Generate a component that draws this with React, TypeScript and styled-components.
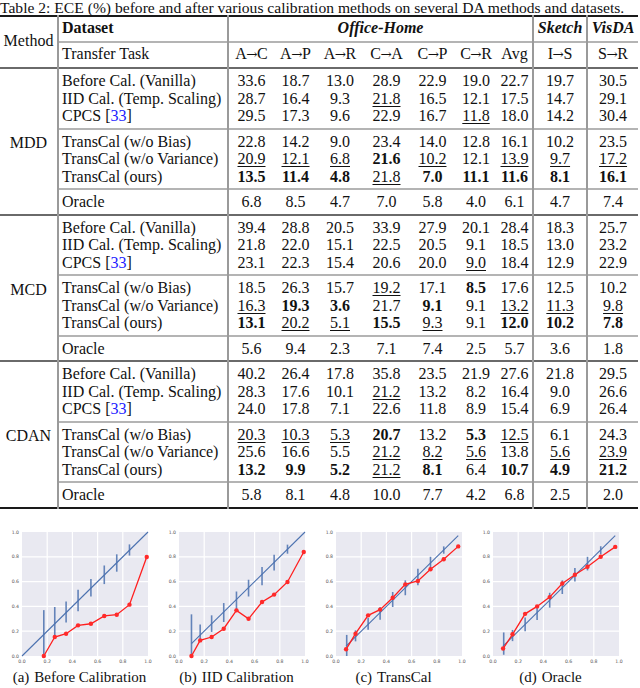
import React from 'react';
import styled, { createGlobalStyle, css } from 'styled-components';

const GlobalStyle = createGlobalStyle`
  body {
    margin: 0;
    background: #fff;
    font-family: 'Liberation Serif', 'Times New Roman', serif;
    color: #111;
  }
`;

const Cite = styled.span`
  color: #1a1aff;
`;

const CpcsLabel = () => (
  <>
    CPCS [<Cite>33</Cite>]
  </>
);

type Group = {
  method: string;
  rows: { label: React.ReactNode; values: string[] }[][];
};

// "_" = underlined, "*" = bold
const groups: Group[] = [
  {
    method: 'MDD',
    rows: [
      [
        { label: 'Before Cal. (Vanilla)', values: ['33.6', '18.7', '13.0', '28.9', '22.9', '19.0', '22.7', '19.7', '30.5'] },
        { label: 'IID Cal. (Temp. Scaling)', values: ['28.7', '16.4', '9.3', '_21.8', '16.5', '12.1', '17.5', '14.7', '29.1'] },
        { label: <CpcsLabel />, values: ['29.5', '17.3', '9.6', '22.9', '16.7', '_11.8', '18.0', '14.2', '30.4'] },
      ],
      [
        { label: 'TransCal (w/o Bias)', values: ['22.8', '14.2', '9.0', '23.4', '14.0', '12.8', '16.1', '10.2', '23.5'] },
        { label: 'TransCal (w/o Variance)', values: ['_20.9', '_12.1', '_6.8', '*21.6', '_10.2', '12.1', '_13.9', '_9.7', '_17.2'] },
        { label: 'TransCal (ours)', values: ['*13.5', '*11.4', '*4.8', '_21.8', '*7.0', '*11.1', '*11.6', '*8.1', '*16.1'] },
      ],
      [{ label: 'Oracle', values: ['6.8', '8.5', '4.7', '7.0', '5.8', '4.0', '6.1', '4.7', '7.4'] }],
    ],
  },
  {
    method: 'MCD',
    rows: [
      [
        { label: 'Before Cal. (Vanilla)', values: ['39.4', '28.8', '20.5', '33.9', '27.9', '20.1', '28.4', '18.3', '25.7'] },
        { label: 'IID Cal. (Temp. Scaling)', values: ['21.8', '22.0', '15.1', '22.5', '20.5', '9.1', '18.5', '13.0', '23.2'] },
        { label: <CpcsLabel />, values: ['23.1', '22.3', '15.4', '20.6', '20.0', '_9.0', '18.4', '12.9', '22.9'] },
      ],
      [
        { label: 'TransCal (w/o Bias)', values: ['18.5', '26.3', '15.7', '_19.2', '17.1', '*8.5', '17.6', '12.5', '10.2'] },
        { label: 'TransCal (w/o Variance)', values: ['_16.3', '*19.3', '*3.6', '21.7', '*9.1', '9.1', '_13.2', '_11.3', '_9.8'] },
        { label: 'TransCal (ours)', values: ['*13.1', '_20.2', '_5.1', '*15.5', '_9.3', '9.1', '*12.0', '*10.2', '*7.8'] },
      ],
      [{ label: 'Oracle', values: ['5.6', '9.4', '2.3', '7.1', '7.4', '2.5', '5.7', '3.6', '1.8'] }],
    ],
  },
  {
    method: 'CDAN',
    rows: [
      [
        { label: 'Before Cal. (Vanilla)', values: ['40.2', '26.4', '17.8', '35.8', '23.5', '21.9', '27.6', '21.8', '29.5'] },
        { label: 'IID Cal. (Temp. Scaling)', values: ['28.3', '17.6', '10.1', '_21.2', '13.2', '8.2', '16.4', '9.0', '26.6'] },
        { label: <CpcsLabel />, values: ['24.0', '17.8', '7.1', '22.6', '11.8', '8.9', '15.4', '6.9', '26.4'] },
      ],
      [
        { label: 'TransCal (w/o Bias)', values: ['_20.3', '_10.3', '_5.3', '*20.7', '13.2', '*5.3', '_12.5', '6.1', '24.3'] },
        { label: 'TransCal (w/o Variance)', values: ['25.6', '16.6', '5.5', '_21.2', '_8.2', '_5.6', '13.8', '_5.6', '_23.9'] },
        { label: 'TransCal (ours)', values: ['*13.2', '*9.9', '*5.2', '_21.2', '*8.1', '6.4', '*10.7', '*4.9', '*21.2'] },
      ],
      [{ label: 'Oracle', values: ['5.8', '8.1', '4.8', '10.0', '7.7', '4.2', '6.8', '2.5', '2.0'] }],
    ],
  },
];

const tasks: [string, string][] = [
  ['A', 'C'],
  ['A', 'P'],
  ['A', 'R'],
  ['C', 'A'],
  ['C', 'P'],
  ['C', 'R'],
];
const colWidths = [58, 170, 46, 43, 46, 47, 45, 42, 36, 54, 51];

type Pt = [number, number];
type Bar = [number, number, number];
type ChartData = { tag: string; caption: string; line: [Pt, Pt]; bars: Bar[]; red: Pt[] };

const charts: ChartData[] = [
  {
    tag: '(a)',
    caption: 'Before Calibration',
    line: [[0, 0], [1, 1]],
    bars: [[0.173, 0, 0.37], [0.26, 0.16, 0.395], [0.35, 0.27, 0.44], [0.445, 0.36, 0.535], [0.547, 0.48, 0.62], [0.653, 0.58, 0.73], [0.752, 0.68, 0.82], [0.853, 0.81, 0.9]],
    red: [[0.173, 0], [0.26, 0.153], [0.35, 0.18], [0.445, 0.247], [0.547, 0.26], [0.653, 0.323], [0.752, 0.333], [0.853, 0.414], [0.99, 0.798]],
  },
  {
    tag: '(b)',
    caption: 'IID Calibration',
    line: [[0.099, 0.099], [1, 1]],
    bars: [[0.099, 0, 0.336], [0.168, 0.126, 0.255], [0.259, 0.194, 0.328], [0.355, 0.274, 0.427], [0.456, 0.37, 0.52], [0.552, 0.48, 0.615], [0.659, 0.57, 0.718], [0.755, 0.69, 0.817], [0.861, 0.825, 0.898]],
    red: [[0.099, 0], [0.168, 0.126], [0.259, 0.153], [0.355, 0.22], [0.456, 0.368], [0.552, 0.3], [0.659, 0.435], [0.755, 0.495], [0.861, 0.597], [0.99, 0.839]],
  },
  {
    tag: '(c)',
    caption: 'TransCal',
    line: [[0.08, 0.08], [0.97, 0.97]],
    bars: [[0.085, 0, 0.17], [0.155, 0.118, 0.207], [0.255, 0.212, 0.306], [0.35, 0.293, 0.395], [0.45, 0.395, 0.516], [0.55, 0.49, 0.61], [0.65, 0.57, 0.704], [0.75, 0.69, 0.8], [0.855, 0.825, 0.884]],
    red: [[0.08, 0.054], [0.155, 0.18], [0.255, 0.328], [0.35, 0.374], [0.45, 0.47], [0.55, 0.578], [0.65, 0.605], [0.75, 0.7], [0.855, 0.78], [0.97, 0.884]],
  },
  {
    tag: '(d)',
    caption: 'Oracle',
    line: [[0.08, 0.08], [0.97, 0.97]],
    bars: [[0.085, 0.01, 0.19], [0.155, 0.12, 0.21], [0.255, 0.2, 0.31], [0.35, 0.29, 0.4], [0.45, 0.39, 0.51], [0.55, 0.5, 0.61], [0.65, 0.6, 0.71], [0.75, 0.69, 0.8], [0.855, 0.82, 0.885]],
    red: [[0.08, 0.06], [0.155, 0.175], [0.255, 0.34], [0.35, 0.4], [0.45, 0.475], [0.55, 0.585], [0.65, 0.655], [0.75, 0.72], [0.855, 0.8], [0.97, 0.88]],
  },
];

const Page = styled.div`
  width: 640px;
  height: 688px;
  overflow: hidden;
`;

const Caption = styled.div`
  font-size: 15.6px;
  line-height: 15px;
  height: 15px;
  white-space: nowrap;
`;

const Table = styled.table`
  width: 638px;
  table-layout: fixed;
  border-collapse: collapse;
  font-size: 16px;
  line-height: 17.5px;
  border-top: 2px solid #1a1a1a;
  border-bottom: 2px solid #1a1a1a;
`;

type RowProps = { $rule?: 'group' | 'section'; $padTop?: boolean; $padBottom?: boolean; $head?: boolean };

const Row = styled.tr<RowProps>`
  & > td {
    padding-top: ${(p) => (p.$head ? 2 : p.$padTop ? 3 : 0)}px;
    padding-bottom: ${(p) => (p.$head ? 4 : p.$padBottom ? 3 : 0)}px;
  }
  ${(p) =>
    p.$rule === 'group' &&
    css`
      & > td {
        border-top: 2px solid #6a6a6a;
      }
    `}
  ${(p) =>
    p.$rule === 'section' &&
    css`
      & > td {
        border-top: 2px solid #b4b4b4;
      }
    `}
`;

const MethodCell = styled.td`
  text-align: center;
  vertical-align: middle;
  padding: 0;
`;

const LabelCell = styled.td<{ $bold?: boolean }>`
  padding-left: 3px;
  padding-right: 0;
  white-space: nowrap;
  border-left: 2px solid #9a9a9a;
  font-weight: ${(p) => (p.$bold ? 700 : 400)};
`;

const NumCell = styled.td<{ $rule?: boolean }>`
  text-align: center;
  padding-left: 0;
  padding-right: 0;
  white-space: nowrap;
  ${(p) => p.$rule && 'border-left: 2px solid #9a9a9a;'}
`;

const DatasetCell = styled(NumCell)`
  font-weight: 700;
  font-style: italic;
`;

const Arrow = styled.span`
  font-family: 'DejaVu Serif', serif;
  font-size: 13.5px;
  margin: 0 -0.5px;
`;

const Under = styled.span`
  text-decoration: underline;
  text-underline-offset: 2px;
  text-decoration-thickness: 1px;
`;

const Bold = styled.span`
  font-weight: 700;
`;

const Figures = styled.div`
  display: flex;
  gap: 12px;
  padding: 18px 0 0 7px;
`;

const Panel = styled.div`
  width: 145px;
  display: flex;
  flex-direction: column;
  align-items: center;
`;

const PanelCaption = styled.div`
  font-size: 15px;
  line-height: 17px;
  margin-top: 4px;
  white-space: nowrap;
`;

const Tag = styled.span`
  margin-right: 5px;
`;

const Value = ({ v }: { v: string }) => {
  if (v.startsWith('_')) return <Under>{v.slice(1)}</Under>;
  if (v.startsWith('*')) return <Bold>{v.slice(1)}</Bold>;
  return <>{v}</>;
};

const Task = ({ from, to }: { from: string; to: string }) => (
  <>
    {from}
    <Arrow>→</Arrow>
    {to}
  </>
);

const PX = 15;
const PY = 5;
const W = 126;
const H = 124;
const sx = (x: number) => PX + x * W;
const sy = (y: number) => PY + (1 - y) * H;
const ticks = [0, 0.2, 0.4, 0.6, 0.8, 1];

const Chart = ({ data }: { data: ChartData }) => (
  <svg width={145} height={138} viewBox="0 0 145 138">
    <rect x={PX} y={PY} width={W} height={H} fill="#e9e9f1" />
    {ticks.slice(1, 5).map((t) => (
      <g key={t} stroke="#fff" strokeWidth={1.2}>
        <line x1={sx(t)} x2={sx(t)} y1={PY} y2={PY + H} />
        <line x1={PX} x2={PX + W} y1={sy(t)} y2={sy(t)} />
      </g>
    ))}
    {ticks.map((t) => (
      <g key={'l' + t} fontFamily="'DejaVu Sans', sans-serif" fontSize={4.6} fill="#555">
        <text x={PX - 3} y={sy(t) + 1.6} textAnchor="end">
          {t.toFixed(1)}
        </text>
        <text x={sx(t)} y={PY + H + 7} textAnchor="middle">
          {t.toFixed(1)}
        </text>
      </g>
    ))}
    <line
      x1={sx(data.line[0][0])}
      y1={sy(data.line[0][1])}
      x2={sx(data.line[1][0])}
      y2={sy(data.line[1][1])}
      stroke="#4c72b0"
      strokeWidth={1.1}
    />
    {data.bars.map(([x, lo, hi]) => (
      <line key={x} x1={sx(x)} x2={sx(x)} y1={sy(lo)} y2={sy(hi)} stroke="#4c72b0" strokeWidth={1.6} opacity={0.85} />
    ))}
    <polyline
      points={data.red.map(([x, y]) => `${sx(x)},${sy(y)}`).join(' ')}
      fill="none"
      stroke="#ff1f1f"
      strokeWidth={1.3}
    />
    {data.red.map(([x, y]) => (
      <circle key={x} cx={sx(x)} cy={sy(y)} r={2.2} fill="#ff2a2a" />
    ))}
  </svg>
);

const App = () => {
  return (
    <Page>
      <GlobalStyle />
      <Caption>
        Table 2: ECE (%) before and after various calibration methods on several DA methods and datasets.
      </Caption>
      <Table>
        <colgroup>
          {colWidths.map((w, i) => (
            <col key={i} style={{ width: w }} />
          ))}
        </colgroup>
        <tbody>
          <Row $head>
            <MethodCell rowSpan={2}>Method</MethodCell>
            <LabelCell $bold>Dataset</LabelCell>
            <DatasetCell colSpan={7} $rule>
              Office-Home
            </DatasetCell>
            <DatasetCell $rule>Sketch</DatasetCell>
            <DatasetCell $rule>VisDA</DatasetCell>
          </Row>
          <Row $head $rule="section">
            <LabelCell>Transfer Task</LabelCell>
            {tasks.map(([a, b], i) => (
              <NumCell key={a + b} $rule={i === 0}>
                <Task from={a} to={b} />
              </NumCell>
            ))}
            <NumCell>Avg</NumCell>
            <NumCell $rule>
              <Task from="I" to="S" />
            </NumCell>
            <NumCell $rule>
              <Task from="S" to="R" />
            </NumCell>
          </Row>
          {groups.map((g) =>
            g.rows.map((section, si) =>
              section.map((r, ri) => (
                <Row
                  key={g.method + si + ri}
                  $rule={ri === 0 ? (si === 0 ? 'group' : 'section') : undefined}
                  $padTop={ri === 0}
                  $padBottom={ri === section.length - 1}
                >
                  {si === 0 && ri === 0 && <MethodCell rowSpan={7}>{g.method}</MethodCell>}
                  <LabelCell>{r.label}</LabelCell>
                  {r.values.map((v, vi) => (
                    <NumCell key={vi} $rule={vi === 0 || vi === 7 || vi === 8}>
                      <Value v={v} />
                    </NumCell>
                  ))}
                </Row>
              ))
            )
          )}
        </tbody>
      </Table>
      <Figures>
        {charts.map((c) => (
          <Panel key={c.tag}>
            <Chart data={c} />
            <PanelCaption>
              <Tag>{c.tag}</Tag>
              {c.caption}
            </PanelCaption>
          </Panel>
        ))}
      </Figures>
    </Page>
  );
};

export default App;
